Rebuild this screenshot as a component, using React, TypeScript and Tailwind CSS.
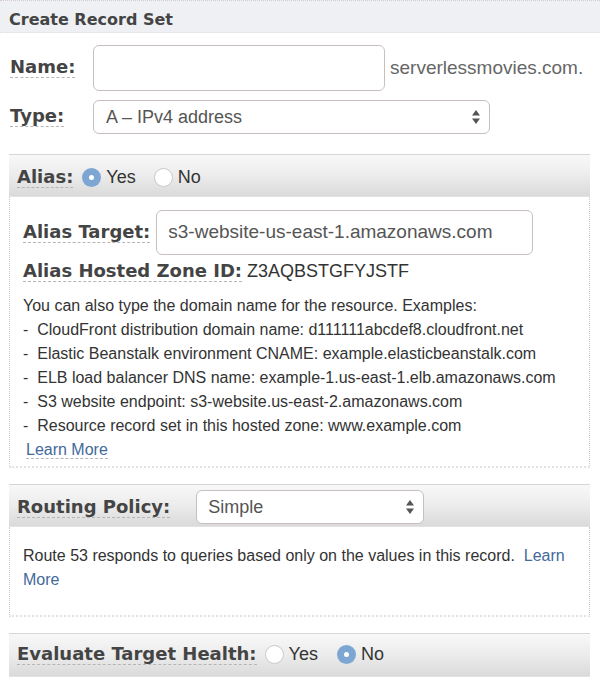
import React from 'react';

const LABEL = "font-['DejaVu_Sans',sans-serif] font-bold text-[#444] border-b border-dashed border-[#b5b5b5] leading-[20px]";
const BODY = "font-['Liberation_Sans',Arial,sans-serif]";

const Radio: React.FC<{ checked?: boolean }> = ({ checked }) =>
  checked ? (
    <span className="w-[19px] h-[19px] rounded-full bg-[#7ea6d3] flex items-center justify-center">
      <span className="w-[5px] h-[5px] rounded-full bg-white" />
    </span>
  ) : (
    <span className="w-[19px] h-[19px] rounded-full bg-white border border-[#c9c9c9]" />
  );

const Arrows: React.FC = () => (
  <svg width="10" height="16" viewBox="0 0 10 16" className="shrink-0">
    <path d="M5 1 L9 6.5 H1 Z" fill="#555" />
    <path d="M5 15 L9 9.5 H1 Z" fill="#555" />
  </svg>
);

const PanelHeader: React.FC<{ children: React.ReactNode; className?: string }> = ({ children, className }) => (
  <div
    className={`flex items-center gap-2 px-2 border-t border-[#d6d6d6] border-b border-b-[#e3e3e3] bg-gradient-to-b from-[#f8f8f8] via-[#ececec] to-[#dadada] ${className ?? ''}`}
  >
    {children}
  </div>
);

export default function App() {
  return (
    <div className={`w-[600px] h-[684px] bg-white overflow-hidden ${BODY} text-[#333]`}>
      {/* Title */}
      <div className="h-[33px] bg-[#eef0f4] border-t border-[#d5cdca] border-b border-dotted border-b-[#e0e0e0] flex items-start pt-[10px] pl-[9px]">
        <span className="font-['DejaVu_Sans',sans-serif] font-bold text-[16px] leading-[18px] text-[#444]">Create Record Set</span>
      </div>

      {/* Name */}
      <div className="flex items-center mt-[12px] pl-[10px]">
        <div className="w-[83px]">
          <span className={`${LABEL} text-[18px]`}>Name:</span>
        </div>
        <div className="w-[292px] h-[46px] rounded-[6px] border border-[#c8c0bc] bg-white" />
        <span className="ml-[5px] text-[19px] text-[#666]">serverlessmovies.com.</span>
      </div>

      {/* Type */}
      <div className="flex items-center mt-[9px] pl-[10px]">
        <div className="w-[83px]">
          <span className={`${LABEL} text-[18px]`}>Type:</span>
        </div>
        <div className="w-[397px] h-[34px] rounded-[6px] border border-[#c8c0bc] bg-white flex items-center justify-between pl-[12px] pr-[8px]">
          <span className="text-[18px] text-[#555]">A – IPv4 address</span>
          <Arrows />
        </div>
      </div>

      {/* Alias panel */}
      <div className="mx-[9px] w-[581px] mt-[20px]">
        <PanelHeader className="h-[43px] pt-[3px]">
          <span className={`${LABEL} text-[18px]`}>Alias:</span>
          <div className="flex items-center gap-[5px] ml-[1px]">
            <Radio checked />
            <span className="text-[18px] text-[#333]">Yes</span>
          </div>
          <div className="flex items-center gap-[5px] ml-[10px]">
            <Radio />
            <span className="text-[18px] text-[#333]">No</span>
          </div>
        </PanelHeader>
        <div className="border-l border-r border-dotted border-[#c8c8c8] border-b-2 border-b-[#e2e2e2] pl-[13px] pt-[13px] pb-[4px]">
          <div className="flex items-center">
            <span className={`${LABEL} text-[18px]`}>Alias Target:</span>
            <div className="ml-[6px] w-[377px] h-[45px] rounded-[6px] border border-[#c8c0bc] flex items-center pl-[11px]">
              <span className="text-[19px] text-[#555] whitespace-nowrap">s3-website-us-east-1.amazonaws.com</span>
            </div>
          </div>
          <div className="flex items-center mt-[3px]">
            <span className={`${LABEL} text-[18px]`}>Alias Hosted Zone ID:</span>
            <span className="ml-[5px] text-[18px] text-[#333]">Z3AQBSTGFYJSTF</span>
          </div>
          <div className="mt-[9px] text-[16px] leading-[24px] text-[#333]">
            <div>You can also type the domain name for the resource. Examples:</div>
            <div>-&nbsp; CloudFront distribution domain name: d111111abcdef8.cloudfront.net</div>
            <div>-&nbsp; Elastic Beanstalk environment CNAME: example.elasticbeanstalk.com</div>
            <div>-&nbsp; ELB load balancer DNS name: example-1.us-east-1.elb.amazonaws.com</div>
            <div>-&nbsp; S3 website endpoint: s3-website.us-east-2.amazonaws.com</div>
            <div>-&nbsp; Resource record set in this hosted zone: www.example.com</div>
            <div className="pl-[3px]">
              <span className="text-[#44699b] border-b border-dashed border-[#b5b5b5]">Learn More</span>
            </div>
          </div>
        </div>
      </div>

      {/* Routing policy panel */}
      <div className="mx-[9px] w-[581px] mt-[16px]">
        <PanelHeader className="h-[43px] pt-[3px]">
          <span className={`${LABEL} text-[18px]`}>Routing Policy:</span>
          <div className="ml-[18px] w-[228px] h-[34px] rounded-[6px] border border-[#c8c0bc] bg-white flex items-center justify-between pl-[11px] pr-[8px]">
            <span className="text-[18px] text-[#555]">Simple</span>
            <Arrows />
          </div>
        </PanelHeader>
        <div className="h-[90px] border-l border-r border-dotted border-[#c8c8c8] border-b-2 border-b-[#e2e2e2] pl-[13px] pr-[8px] pt-[17px] text-[16px] leading-[24px] text-[#333]">
          <div>
            Route 53 responds to queries based only on the values in this record.&nbsp;{' '}
            <span className="text-[#44699b]">Learn</span>
          </div>
          <div className="text-[#44699b]">More</div>
        </div>
      </div>

      {/* Evaluate target health */}
      <div className="mx-[9px] w-[581px] mt-[16px]">
        <PanelHeader className="h-[44px] pb-[2px]">
          <span className={`${LABEL} text-[18px]`}>Evaluate Target Health:</span>
          <div className="flex items-center gap-[5px]">
            <Radio />
            <span className="text-[18px] text-[#333]">Yes</span>
          </div>
          <div className="flex items-center gap-[5px] ml-[11px]">
            <Radio checked />
            <span className="text-[18px] text-[#333]">No</span>
          </div>
        </PanelHeader>
      </div>
    </div>
  );
}
